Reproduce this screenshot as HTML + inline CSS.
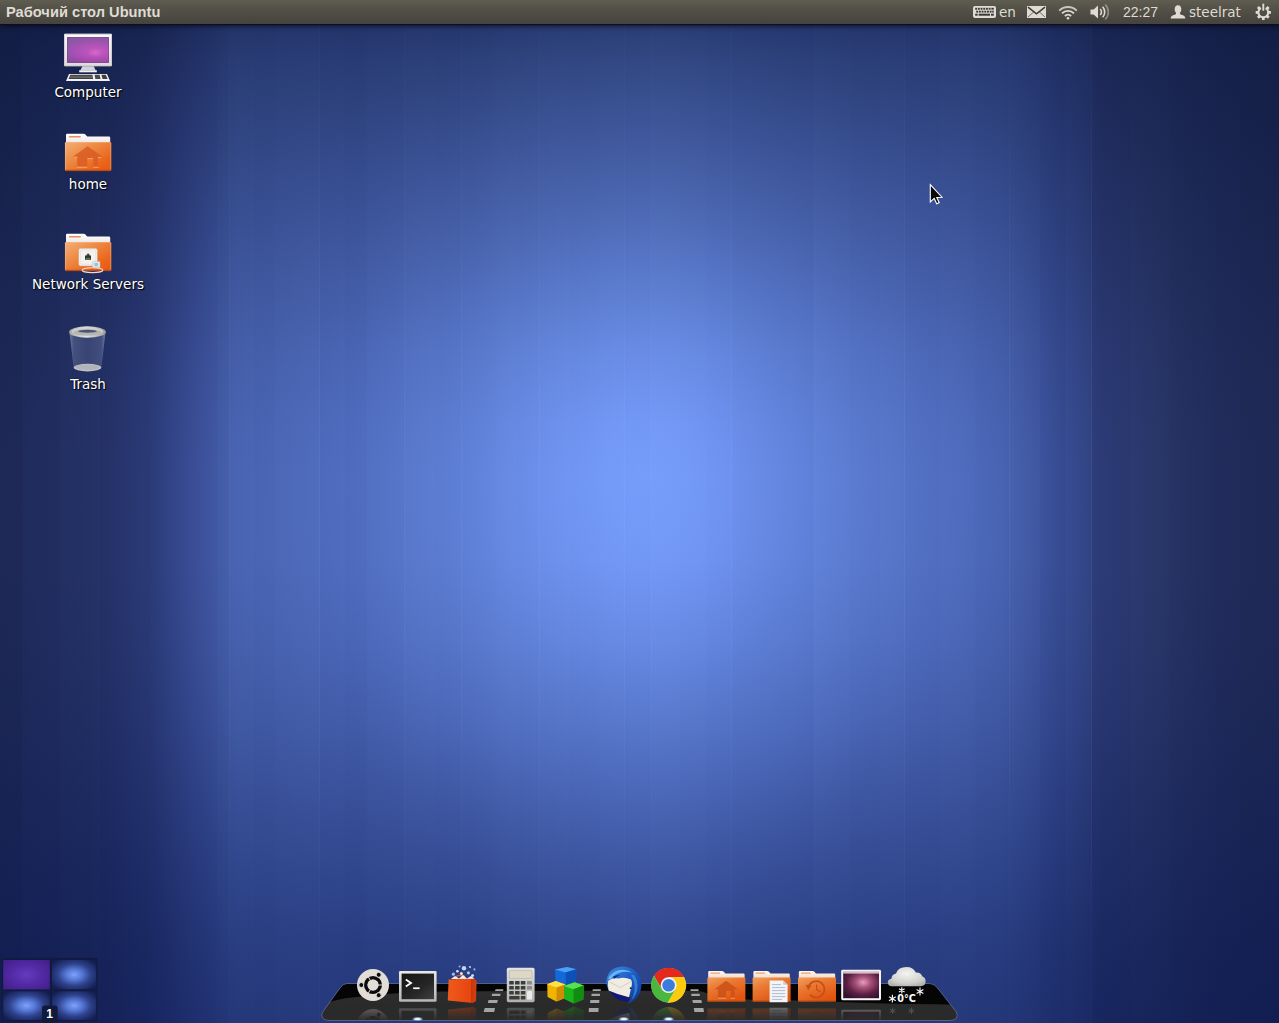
<!DOCTYPE html>
<html lang="ru">
<head>
<meta charset="utf-8">
<title>Рабочий стол Ubuntu</title>
<style>
html,body{margin:0;padding:0;}
body{width:1279px;height:1023px;overflow:hidden;position:relative;background:#1a2450;font-family:"DejaVu Sans","Liberation Sans",sans-serif;}
#wall{position:absolute;left:0;top:0;width:1279px;height:1023px;
background:linear-gradient(180deg,rgba(11,22,58,0.62) 24px,rgba(11,22,58,0.52) 60px,rgba(11,22,58,0.45) 100px,rgba(11,22,58,0.33) 174px,rgba(11,22,58,0.18) 274px,rgba(11,22,58,0.08) 350px,rgba(11,22,58,0.02) 424px,rgba(11,22,58,0) 480px,rgba(9,22,78,0.0) 560px,rgba(9,22,78,0.05) 640px,rgba(9,22,78,0.15) 724px,rgba(9,22,78,0.27) 800px,rgba(9,22,78,0.39) 874px,rgba(9,22,78,0.5) 950px,rgba(9,22,78,0.57) 1023px),
linear-gradient(90deg,rgba(255,255,255,0) 229px,rgba(255,255,255,.045) 229px,rgba(255,255,255,.045) 230px,rgba(255,255,255,0) 230px,rgba(255,255,255,0) 319px,rgba(255,255,255,.045) 319px,rgba(255,255,255,.045) 320px,rgba(255,255,255,0) 320px,rgba(255,255,255,0) 404px,rgba(255,255,255,.045) 404px,rgba(255,255,255,.045) 405px,rgba(255,255,255,0) 405px,rgba(255,255,255,0) 461px,rgba(255,255,255,.045) 461px,rgba(255,255,255,.045) 462px,rgba(255,255,255,0) 462px,rgba(255,255,255,0) 539px,rgba(255,255,255,.045) 539px,rgba(255,255,255,.045) 540px,rgba(255,255,255,0) 540px,rgba(255,255,255,0) 624px,rgba(255,255,255,.045) 624px,rgba(255,255,255,.045) 625px,rgba(255,255,255,0) 625px,rgba(255,255,255,0) 651px,rgba(255,255,255,.045) 651px,rgba(255,255,255,.045) 652px,rgba(255,255,255,0) 652px,rgba(255,255,255,0) 731px,rgba(255,255,255,.045) 731px,rgba(255,255,255,.045) 732px,rgba(255,255,255,0) 732px,rgba(255,255,255,0) 814px,rgba(255,255,255,.045) 814px,rgba(255,255,255,.045) 815px,rgba(255,255,255,0) 815px,rgba(255,255,255,0) 904px,rgba(255,255,255,.045) 904px,rgba(255,255,255,.045) 905px,rgba(255,255,255,0) 905px,rgba(255,255,255,0) 1009px,rgba(255,255,255,.045) 1009px,rgba(255,255,255,.045) 1010px,rgba(255,255,255,0) 1010px,rgba(255,255,255,0) 1091px,rgba(255,255,255,.045) 1091px,rgba(255,255,255,.045) 1092px,rgba(255,255,255,0) 1092px),
linear-gradient(90deg,rgba(0,0,10,0.06) 0px,rgba(0,0,10,0.06) 22px,rgba(150,185,255,0.000) 22px,rgba(150,185,255,0.000) 60px,rgba(150,185,255,0.016) 60px,rgba(150,185,255,0.016) 100px,rgba(0,0,10,0.01) 100px,rgba(0,0,10,0.01) 150px,rgba(150,185,255,0.000) 150px,rgba(150,185,255,0.000) 217px,rgba(150,185,255,0.026) 217px,rgba(150,185,255,0.026) 230px,rgba(150,185,255,0.046) 230px,rgba(150,185,255,0.046) 254px,rgba(150,185,255,0.026) 254px,rgba(150,185,255,0.026) 275px,rgba(150,185,255,0.046) 275px,rgba(150,185,255,0.046) 320px,rgba(150,185,255,0.013) 320px,rgba(150,185,255,0.013) 345px,rgba(0,0,10,0.01) 345px,rgba(0,0,10,0.01) 367px,rgba(150,185,255,0.019) 367px,rgba(150,185,255,0.019) 405px,rgba(150,185,255,0.046) 405px,rgba(150,185,255,0.046) 435px,rgba(150,185,255,0.026) 435px,rgba(150,185,255,0.026) 462px,rgba(150,185,255,0.039) 462px,rgba(150,185,255,0.039) 495px,rgba(150,185,255,0.058) 495px,rgba(150,185,255,0.058) 517px,rgba(150,185,255,0.039) 517px,rgba(150,185,255,0.039) 540px,rgba(150,185,255,0.052) 540px,rgba(150,185,255,0.052) 570px,rgba(150,185,255,0.026) 570px,rgba(150,185,255,0.026) 600px,rgba(150,185,255,0.046) 600px,rgba(150,185,255,0.046) 625px,rgba(150,185,255,0.026) 625px,rgba(150,185,255,0.026) 652px,rgba(150,185,255,0.058) 652px,rgba(150,185,255,0.058) 680px,rgba(150,185,255,0.039) 680px,rgba(150,185,255,0.039) 707px,rgba(150,185,255,0.000) 707px,rgba(150,185,255,0.000) 732px,rgba(0,0,10,0.012) 732px,rgba(0,0,10,0.012) 787px,rgba(0,0,10,0.008) 787px,rgba(0,0,10,0.008) 815px,rgba(150,185,255,0.039) 815px,rgba(150,185,255,0.039) 850px,rgba(150,185,255,0.019) 850px,rgba(150,185,255,0.019) 880px,rgba(150,185,255,0.039) 880px,rgba(150,185,255,0.039) 905px,rgba(150,185,255,0.013) 905px,rgba(150,185,255,0.013) 940px,rgba(150,185,255,0.033) 940px,rgba(150,185,255,0.033) 975px,rgba(150,185,255,0.007) 975px,rgba(150,185,255,0.007) 1010px,rgba(150,185,255,0.026) 1010px,rgba(150,185,255,0.026) 1040px,rgba(150,185,255,0.000) 1040px,rgba(150,185,255,0.000) 1065px,rgba(150,185,255,0.026) 1065px,rgba(150,185,255,0.026) 1092px,rgba(0,0,10,0.03) 1092px,rgba(0,0,10,0.03) 1130px,rgba(150,185,255,0.000) 1130px,rgba(150,185,255,0.000) 1170px,rgba(0,0,10,0.02) 1170px,rgba(0,0,10,0.02) 1200px,rgba(150,185,255,0.000) 1200px,rgba(150,185,255,0.000) 1240px,rgba(0,0,10,0.03) 1240px,rgba(0,0,10,0.03) 1279px),
radial-gradient(ellipse 420px 660px at 645px 468px,rgba(117,156,252,1) 0%,rgba(117,156,252,0.93) 10%,rgba(117,156,252,0.8) 20%,rgba(117,156,252,0.65) 30%,rgba(117,156,252,0.5) 40%,rgba(117,156,252,0.38) 50%,rgba(117,156,252,0.27) 60%,rgba(117,156,252,0.16) 70%,rgba(117,156,252,0.08) 80%,rgba(117,156,252,0.03) 90%,rgba(117,156,252,0) 100%),
linear-gradient(90deg,rgba(117,156,252,0) 470px,rgba(117,156,252,.1) 540px,rgba(117,156,252,.2) 645px,rgba(117,156,252,.1) 760px,rgba(117,156,252,0) 840px),
linear-gradient(90deg,#1f2a5a 0px,#222f63 90px,#2b3b78 150px,#3a4d95 192px,#4560ae 235px,#4863b3 320px,#4a66b8 640px,#4863b3 960px,#4560ae 1000px,#3c529c 1040px,#33468a 1075px,#2d3d7a 1100px,#283668 1160px,#212c5c 1220px,#1f2a58 1279px);}
#panel{position:absolute;left:0;top:0;width:1279px;height:24px;background:linear-gradient(#5f5d50 0%,#504e45 50%,#45433d 100%);box-shadow:0 1px 0 rgba(12,14,32,.9),0 2px 5px rgba(0,0,16,.7);}
#panel .title{position:absolute;left:6px;top:1px;line-height:23px;font-family:"Liberation Sans","DejaVu Sans",sans-serif;font-weight:bold;font-size:14.67px;color:#dfdbd2;white-space:nowrap;}
.ind{position:absolute;top:1px;line-height:23px;font-size:13.5px;color:#dfdbd2;white-space:nowrap;}
.ind.clock{font-family:"Liberation Sans","DejaVu Sans",sans-serif;font-size:14px;}
.pi{position:absolute;}
.dicon{position:absolute;left:-12px;margin-top:1px;width:200px;text-align:center;color:#fff;font-size:13.5px;line-height:18px;white-space:nowrap;text-shadow:1px 1px 1px rgba(0,0,0,.95),0 0 2px rgba(0,0,0,.5);}
</style>
</head>
<body>
<div id="wall"></div>
<div id="panel">
 <div class="title">Рабочий стол Ubuntu</div>
 <svg class="pi" style="left:973px;top:6px" width="23" height="12" viewBox="0 0 23 12">
  <rect x="0" y="0" width="23" height="12" rx="2" fill="#dfdbd2"/>
  <g fill="#3a3935">
   <rect x="2.2" y="1.8" width="1.9" height="1.9"/><rect x="4.9" y="1.8" width="1.9" height="1.9"/><rect x="7.6" y="1.8" width="1.9" height="1.9"/><rect x="10.3" y="1.8" width="1.9" height="1.9"/><rect x="13" y="1.8" width="1.9" height="1.9"/><rect x="15.7" y="1.8" width="1.9" height="1.9"/><rect x="18.4" y="1.8" width="2.4" height="1.9"/>
   <rect x="3.2" y="4.7" width="1.9" height="1.9"/><rect x="5.9" y="4.7" width="1.9" height="1.9"/><rect x="8.6" y="4.7" width="1.9" height="1.9"/><rect x="11.3" y="4.7" width="1.9" height="1.9"/><rect x="14" y="4.7" width="1.9" height="1.9"/><rect x="16.7" y="4.7" width="1.9" height="1.9"/><rect x="19.2" y="4.7" width="1.6" height="1.9"/>
   <rect x="2.2" y="7.7" width="2.4" height="2"/><rect x="5.6" y="7.7" width="11.4" height="2"/><rect x="18" y="7.7" width="2.8" height="2"/>
  </g>
 </svg>
 <div class="ind" style="left:999px">en</div>
 <svg class="pi" style="left:1027px;top:6px" width="19" height="12" viewBox="0 0 19 12">
  <rect x="0" y="0" width="19" height="12" fill="#dfdbd2"/>
  <path d="M1 1.2 L9.5 7.8 L18 1.2" fill="none" stroke="#3a3935" stroke-width="1.5"/>
  <path d="M1 11 L6.8 5.8 M18 11 L12.2 5.8" fill="none" stroke="#45433e" stroke-width=".9" opacity=".8"/>
 </svg>
 <svg class="pi" style="left:1056px;top:4px" width="24" height="16" viewBox="0 0 24 16">
  <g fill="none" stroke="#dfdbd2" stroke-linecap="butt">
   <path d="M3.2 6.6 A12.5 12.5 0 0 1 20.8 6.6" stroke-width="1.8" opacity=".85"/>
   <path d="M6 9.4 A8.5 8.5 0 0 1 18 9.4" stroke-width="1.9"/>
   <path d="M8.9 12.1 A4.4 4.4 0 0 1 15.1 12.1" stroke-width="1.9"/>
  </g>
  <circle cx="12" cy="14.2" r="1.3" fill="#dfdbd2"/>
 </svg>
 <svg class="pi" style="left:1089px;top:3px" width="23" height="18" viewBox="0 0 23 18">
  <path d="M1.5 6.6 H4.6 L9 2.6 V15.4 L4.6 11.4 H1.5 Z" fill="#dfdbd2"/>
  <g fill="none" stroke="#dfdbd2" stroke-width="1.6">
   <path d="M11.2 6 A4.2 4.2 0 0 1 11.2 12"/>
   <path d="M13.6 3.8 A7.4 7.4 0 0 1 13.6 14.2"/>
   <path d="M16.3 1.6 A10.6 10.6 0 0 1 16.3 16.4" opacity=".45"/>
  </g>
 </svg>
 <div class="ind clock" style="left:1123px">22:27</div>
 <svg class="pi" style="left:1170px;top:5px" width="16" height="14" viewBox="0 0 16 14">
  <path d="M8 0.3 C10.4 0.3 11.3 2.2 11.3 4.2 C11.3 6 10.6 7 9.9 7.7 C9.9 8.9 10.4 9.4 12.2 10.1 C14.2 10.9 15.2 11.6 15.4 13.6 H0.6 C0.8 11.6 1.8 10.9 3.8 10.1 C5.6 9.4 6.1 8.9 6.1 7.7 C5.4 7 4.7 6 4.7 4.2 C4.7 2.2 5.6 0.3 8 0.3 Z" fill="#dfdbd2"/>
 </svg>
 <div class="ind" style="left:1189px">steelrat</div>
 <svg class="pi" style="left:1254px;top:3px" width="19" height="18" viewBox="0 0 19 18">
  <g transform="translate(9.3 9.4) scale(.93)">
   <g fill="#dfdbd2">
    <rect x="-1.5" y="-8.2" width="3" height="3.4" transform="rotate(45)"/>
    <rect x="-1.5" y="-8.2" width="3" height="3.4" transform="rotate(90)"/>
    <rect x="-1.5" y="-8.2" width="3" height="3.4" transform="rotate(135)"/>
    <rect x="-1.5" y="-8.2" width="3" height="3.4" transform="rotate(180)"/>
    <rect x="-1.5" y="-8.2" width="3" height="3.4" transform="rotate(225)"/>
    <rect x="-1.5" y="-8.2" width="3" height="3.4" transform="rotate(270)"/>
    <rect x="-1.5" y="-8.2" width="3" height="3.4" transform="rotate(315)"/>
   </g>
   <path d="M-2.6 -4.6 A5.3 5.3 0 1 0 2.6 -4.6" fill="none" stroke="#dfdbd2" stroke-width="2.2"/>
   <rect x="-1" y="-9.4" width="2" height="7.6" fill="#dfdbd2"/>
  </g>
 </svg>
</div>
<svg style="position:absolute;left:56px;top:28px" width="64" height="56" viewBox="56 28 64 56">
 <defs>
  <linearGradient id="mfr" x1="0" y1="0" x2="0" y2="1"><stop offset="0" stop-color="#fbfbfb"/><stop offset="1" stop-color="#dcdadc"/></linearGradient>
  <radialGradient id="mscr" cx="0.68" cy="0.62" r="0.75"><stop offset="0" stop-color="#dc6cc8"/><stop offset="0.25" stop-color="#c054c0"/><stop offset="0.7" stop-color="#a850b4"/><stop offset="1" stop-color="#8a5aa8"/></radialGradient>
  <linearGradient id="mscr2" x1="0" y1="0" x2="0" y2="1"><stop offset="0" stop-color="#7a5a98" stop-opacity=".55"/><stop offset=".5" stop-color="#9a58b0" stop-opacity="0"/><stop offset="1" stop-color="#7a2a80" stop-opacity=".35"/></linearGradient>
 </defs>
 <rect x="64" y="33.8" width="48" height="32.4" rx="1" fill="url(#mfr)"/>
 <rect x="64.5" y="34.3" width="47" height="31.4" rx="1" fill="none" stroke="#c9c6cc" stroke-width=".8"/>
 <rect x="67.2" y="37.3" width="41.6" height="25.4" fill="url(#mscr)"/>
 <rect x="67.2" y="37.3" width="41.6" height="25.4" fill="url(#mscr2)"/>
 <rect x="67.5" y="37.6" width="41" height="24.8" fill="none" stroke="#6a2a70" stroke-width=".7" opacity=".7"/>
 <path d="M82.4 66.2 H93.8 L95.6 70.2 H80.4 Z" fill="#d4d4d8"/>
 <path d="M79.2 70.2 H96.8 V72.3 H79.2 Z" fill="#f0f0f2"/>
 <path d="M69 73.9 H107 L110 81 H66 Z" fill="#f2f2f4"/>
 <path d="M70.2 74.8 H92.4 L93.2 79 H68.6 Z" fill="#3a3a3c"/>
 <path d="M94.6 74.8 H99.6 L100.6 79 H95.4 Z" fill="#4a4a4c"/>
 <path d="M101.4 74.8 H105.8 L107.6 79 H102.6 Z" fill="#3e3e40"/>
 <path d="M70 76.2 H92.8 M69.4 77.6 H93" stroke="#9a9a9c" stroke-width=".5"/>
</svg>
<div class="dicon" style="top:82px">Computer</div>

<svg style="position:absolute;left:60px;top:128px" width="56" height="48" viewBox="60 128 56 48">
 <defs>
  <linearGradient id="fold" x1="0" y1="0" x2="1" y2="1"><stop offset="0" stop-color="#f4b07a"/><stop offset=".35" stop-color="#ee8e48"/><stop offset=".75" stop-color="#ea661c"/><stop offset="1" stop-color="#e8560e"/></linearGradient>
  <linearGradient id="foldb" x1="0" y1="0" x2="0" y2="1"><stop offset="0" stop-color="#ffffff"/><stop offset="1" stop-color="#e8e4e4"/></linearGradient>
 </defs>
 <g id="folder">
  <path d="M66 135 Q66 133.8 67.2 133.8 H83.6 Q84.6 133.8 85.4 134.6 L87.2 136.6 H109 Q110.2 136.6 110.2 137.8 V145 H66 Z" fill="url(#foldb)"/>
  <rect x="69" y="136" width="11.8" height="1.5" rx=".5" fill="#f08a58"/>
  <rect x="65" y="142" width="46.2" height="29" rx="1.2" fill="url(#fold)"/>
  <rect x="65.4" y="142.4" width="45.4" height="28.2" rx="1" fill="none" stroke="#f8c8a0" stroke-width=".7" opacity=".6"/>
  <path d="M65 169.8 H111.2 V170 Q111.2 171 110 171 H66.2 Q65 171 65 170 Z" fill="#c8480c"/>
 </g>
 <path d="M87.6 146.2 L102.4 156.6 H98 V166.6 H93.2 V158.4 H87.2 V166.6 H77.2 V156.6 H73.2 Z" fill="#d95e26" opacity=".9"/>
 <path d="M74.6 157.6 H77.2 M87.4 158.6 H93 M98 157.6 H101 M76.8 167.3 H87.2 M93.2 167.3 H98.6" stroke="#f6a878" stroke-width=".9"/>
</svg>
<div class="dicon" style="top:174px">home</div>

<svg style="position:absolute;left:60px;top:228px" width="56" height="48" viewBox="60 128 56 48">
 <use href="#folder"/>
 <rect x="78.6" y="148.2" width="18.8" height="17.8" rx="2" fill="#f4f2ee" stroke="#d8a078" stroke-width=".6"/>
 <rect x="80.4" y="150" width="15.2" height="14.2" rx="1" fill="none" stroke="#e0dcd6" stroke-width=".6"/>
 <path d="M85 155.6 H86.6 V154.4 H87.4 V153.6 H88.8 V154.4 H89.6 V155.6 H91 V159.8 H85 Z" fill="#2e3a2c"/>
 <rect x="86" y="158" width="4" height="1" fill="#6a7a4a"/>
 <ellipse cx="92.5" cy="170.2" rx="10.4" ry="2.4" fill="none" stroke="#f4d8d4" stroke-width="1.1"/>
 <rect x="92.6" y="161.4" width="7.4" height="6.4" rx="1" fill="#dfe9ee" stroke="#b8c4c8" stroke-width=".5"/>
 <rect x="94.4" y="163" width="3.6" height="3.2" fill="#9cc4d0"/>
</svg>
<div class="dicon" style="top:274px">Network Servers</div>

<svg style="position:absolute;left:60px;top:320px" width="56" height="56" viewBox="60 320 56 56">
 <defs>
  <linearGradient id="trb" x1="0" y1="0" x2="1" y2="0"><stop offset="0" stop-color="#8a94b4" stop-opacity=".75"/><stop offset=".12" stop-color="#5a6690" stop-opacity=".6"/><stop offset=".5" stop-color="#4a5684" stop-opacity=".55"/><stop offset=".88" stop-color="#56628e" stop-opacity=".6"/><stop offset="1" stop-color="#8a94b4" stop-opacity=".75"/></linearGradient>
  <linearGradient id="trr" x1="0" y1="0" x2="1" y2="0"><stop offset="0" stop-color="#a8aaa8"/><stop offset=".45" stop-color="#e4e4e0"/><stop offset="1" stop-color="#9c9e9c"/></linearGradient>
 </defs>
 <path d="M69.6 333 L73.6 367.4 Q87.5 372.5 101.4 367.4 L105.4 333 Z" fill="url(#trb)"/>
 <ellipse cx="87.5" cy="367.6" rx="13.8" ry="3.8" fill="#c0c4c4"/>
 <ellipse cx="87.5" cy="367.3" rx="12.2" ry="2.8" fill="#b0b4b8"/>
 <ellipse cx="87.5" cy="332" rx="18.4" ry="5.8" fill="url(#trr)"/>
 <ellipse cx="87.5" cy="331.7" rx="15.6" ry="4.2" fill="#d2d2ca"/>
 <ellipse cx="87.5" cy="332.4" rx="14.4" ry="3.2" fill="#b4b6b4"/>
 <ellipse cx="87.5" cy="331.2" rx="9.4" ry="1.5" fill="#4c5478"/>
</svg>
<div class="dicon" style="top:374px">Trash</div>
<svg id="dock" style="position:absolute;left:300px;top:950px" width="680" height="73" viewBox="300 950 680 73">
 <defs>
  <clipPath id="dockclip"><path id="dockshape" d="M347 983.5 H929.5 Q934 983.5 937.5 988 L956 1011.5 Q958.5 1015 956.5 1018 Q954.5 1020.5 950 1020.5 H329 Q324.5 1020.5 322.5 1018 Q320.5 1015 323 1011.5 L340 988 Q343 983.5 347 983.5 Z"/></clipPath>
  <linearGradient id="reffade" x1="0" y1="1006" x2="0" y2="1022" gradientUnits="userSpaceOnUse"><stop offset="0" stop-color="#fff" stop-opacity=".34"/><stop offset=".55" stop-color="#fff" stop-opacity=".13"/><stop offset="1" stop-color="#fff" stop-opacity="0"/></linearGradient>
  <mask id="refmask" maskUnits="userSpaceOnUse" x="300" y="1000" width="680" height="23"><rect x="300" y="1005.5" width="680" height="18" fill="url(#reffade)"/></mask>
  <linearGradient id="gloss" x1="0" y1="988" x2="0" y2="1021" gradientUnits="userSpaceOnUse"><stop offset="0" stop-color="#2e2e2e"/><stop offset="1" stop-color="#262626"/></linearGradient>
  <linearGradient id="termb" x1="0" y1="0" x2="0" y2="1"><stop offset="0" stop-color="#e8e8e8"/><stop offset="1" stop-color="#b4b4b4"/></linearGradient>
  <linearGradient id="termi" x1="0" y1="0" x2="1" y2="1"><stop offset="0" stop-color="#141414"/><stop offset=".6" stop-color="#262626"/><stop offset="1" stop-color="#404040"/></linearGradient>
  <linearGradient id="bag" x1="0" y1="0" x2="1" y2="0"><stop offset="0" stop-color="#ee5a1c"/><stop offset=".8" stop-color="#e6460e"/><stop offset=".81" stop-color="#c4380c"/><stop offset="1" stop-color="#d64010"/></linearGradient>
  <linearGradient id="calc" x1="0" y1="0" x2="0" y2="1"><stop offset="0" stop-color="#e4e4e4"/><stop offset="1" stop-color="#b0b0b0"/></linearGradient>
  <linearGradient id="dfold" x1="0" y1="0" x2=".6" y2="1"><stop offset="0" stop-color="#f0a060"/><stop offset=".4" stop-color="#ea7a32"/><stop offset="1" stop-color="#e05410"/></linearGradient>
  <linearGradient id="dfoldb" x1="0" y1="0" x2="0" y2="1"><stop offset="0" stop-color="#fdf8f4"/><stop offset="1" stop-color="#f2d2bc"/></linearGradient>
  <radialGradient id="dsk" cx=".56" cy=".4" r=".7"><stop offset="0" stop-color="#e0a0bc"/><stop offset=".3" stop-color="#a85078"/><stop offset=".65" stop-color="#5c2044"/><stop offset="1" stop-color="#30102a"/></radialGradient>
  <radialGradient id="cloud" cx=".5" cy=".35" r=".7"><stop offset="0" stop-color="#f4f4f2"/><stop offset=".7" stop-color="#d0d0cc"/><stop offset="1" stop-color="#b0b0ac"/></radialGradient>
  <linearGradient id="tbg" x1="0" y1="0" x2="1" y2="1"><stop offset="0" stop-color="#3c8ce4"/><stop offset=".5" stop-color="#1c5cc4"/><stop offset="1" stop-color="#0c348c"/></linearGradient>
  <radialGradient id="dotg" cx=".5" cy=".5" r=".5"><stop offset="0" stop-color="#ffffff"/><stop offset=".45" stop-color="#cfe4ff"/><stop offset="1" stop-color="#6aa0ff" stop-opacity="0"/></radialGradient>
 </defs>
 <use href="#dockshape" fill="#050505"/>
 <g clip-path="url(#dockclip)">
  <path d="M315 1006 L322 1004.5 Q334 1000.5 344 998.6 Q380 993.6 430 991.8 Q480 990.8 560 990.8 H694 Q702 991 706 993 Q716 998.4 745 999.4 Q800 1000.6 840 1002 Q880 1003.6 935 1004.5 L970 1006 V1024 H315 Z" fill="url(#gloss)"/>
  <rect x="300" y="1004.5" width="680" height="20" fill="#2a2a2a"/>
 </g>
 <use href="#dockshape" fill="none" stroke="#7f93c8" stroke-opacity=".55" stroke-width="1"/>
 <g id="dicons">
  <!-- ubuntu -->
  <g id="i_ub">
   <circle cx="373" cy="985" r="16" fill="#e2ded6"/>
   <circle cx="373" cy="985" r="7.3" fill="none" stroke="#0c0c10" stroke-width="3.5"/>
   <g stroke="#e2ded6" stroke-width="1">
    <path d="M373 985 L383.5 985 M373 985 L367.75 975.9 M373 985 L367.75 994.1"/>
   </g>
   <circle cx="373" cy="985" r="5.4" fill="#e2ded6"/>
   <g fill="#0c0c10" stroke="#e2ded6" stroke-width="1">
    <circle cx="361.3" cy="985" r="2.5"/><circle cx="378.7" cy="974.8" r="2.5"/><circle cx="378.7" cy="995.2" r="2.5"/>
   </g>
  </g>
  <!-- terminal -->
  <g id="i_term">
   <rect x="399" y="971" width="37.6" height="30.8" rx="1.2" fill="url(#termb)"/>
   <rect x="401.6" y="973.6" width="32.4" height="25.6" fill="url(#termi)"/>
   <path d="M405.8 979.6 L411 983 L405.8 986.4" fill="none" stroke="#fff" stroke-width="1.8"/>
   <rect x="413.2" y="987.4" width="6.4" height="1.7" fill="#fff"/>
  </g>
  <!-- software center bag -->
  <g id="i_bag">
   <path d="M448.6 979.6 L473.4 978.6 L476.6 980.6 L476 1001 L473 1003 L447.8 1000.4 Z" fill="url(#bag)"/>
   <path d="M456.6 980.2 V977.2 Q456.6 975.6 458.2 975.6 H463 Q464.6 975.6 464.6 977.2 V980" fill="none" stroke="#e85a20" stroke-width="1.4"/>
   <g fill="#dfe8f8">
    <circle cx="453.4" cy="974.2" r="1.6" fill="#9fb8e8"/><circle cx="457.4" cy="971.2" r="1.3"/><circle cx="461.4" cy="973.6" r="1.5"/><circle cx="464" cy="968.2" r="2.2" fill="#c8d4ec"/><circle cx="468.4" cy="972.8" r="1.6" fill="#a8c4f0"/><circle cx="472.6" cy="975.6" r="1.4"/><circle cx="474.4" cy="969.4" r="1.1" fill="#8fb0f0"/><circle cx="459.6" cy="966.6" r="1" fill="#8fb0f0"/><circle cx="470" cy="967" r=".9"/>
    <path d="M451 979 L455 976 L459 978.6 L463 975 L467 978.4 L471 976 L474.6 978.8 Z" fill="#f4f0f0"/>
   </g>
  </g>
  <!-- calculator -->
  <g id="i_calc">
   <rect x="506.8" y="967.8" width="27.8" height="34.4" rx="1.6" fill="url(#calc)"/>
   <rect x="509.4" y="970.4" width="22.6" height="8" rx=".8" fill="#dcd8c4" stroke="#a8a8a0" stroke-width=".5"/>
   <g fill="#3c3e3a">
    <rect x="509.2" y="981" width="4.6" height="3.6" rx=".6"/><rect x="515" y="981" width="4.6" height="3.6" rx=".6"/><rect x="520.8" y="981" width="4.6" height="3.6" rx=".6"/>
    <rect x="509.2" y="986" width="4.6" height="3.6" rx=".6"/><rect x="515" y="986" width="4.6" height="3.6" rx=".6"/><rect x="520.8" y="986" width="4.6" height="3.6" rx=".6"/>
    <rect x="509.2" y="991" width="4.6" height="3.6" rx=".6"/><rect x="515" y="991" width="4.6" height="3.6" rx=".6"/><rect x="520.8" y="991" width="4.6" height="3.6" rx=".6"/>
    <rect x="509.2" y="996" width="10.4" height="3.6" rx=".6"/><rect x="520.8" y="996" width="4.6" height="3.6" rx=".6"/>
   </g>
   <g fill="#8a8c88"><rect x="527" y="981" width="5" height="3.6" rx=".6"/><rect x="527" y="986" width="5" height="3.6" rx=".6"/></g>
   <rect x="527" y="991" width="5" height="8.6" rx=".6" fill="#e8ece8"/>
  </g>
  <!-- cubes -->
  <g id="i_cubes">
   <path d="M555 969.6 L567 967 L576.4 969.2 L576 982.4 L566 985.8 L555.6 982.6 Z" fill="#1468d8"/>
   <path d="M555 969.6 L567 967 L576.4 969.2 L565.6 972.4 Z" fill="#4aa0f4"/>
   <path d="M565.6 972.4 L576.4 969.2 L576 982.4 L566 985.8 Z" fill="#0c50b8"/>
   <path d="M547.2 984.2 L555.6 981 L565.4 984.4 L565 998 L556.4 1001.6 L547.6 997 Z" fill="#f0b400"/>
   <path d="M547.2 984.2 L555.6 981 L565.4 984.4 L556.6 987.6 Z" fill="#fce048"/>
   <path d="M556.6 987.6 L565.4 984.4 L565 998 L556.4 1001.6 Z" fill="#d08c00"/>
   <path d="M564 986 L574.6 982.2 L583.8 985.4 L583.4 999.4 L573.6 1003.6 L564.2 999 Z" fill="#1cb41c"/>
   <path d="M564 986 L574.6 982.2 L583.8 985.4 L573.4 989.2 Z" fill="#58e050"/>
   <path d="M573.4 989.2 L583.8 985.4 L583.4 999.4 L573.6 1003.6 Z" fill="#108c10"/>
  </g>
  <!-- thunderbird -->
  <g id="i_tb">
   <path d="M606.4 980.6 Q607.2 973.6 612.4 969.6 Q618.4 965.6 626 966.8 Q636 968.6 640.2 977.4 Q643.6 986.4 638.6 995 Q634.8 1001.4 627.6 1003.8 Q631 999.6 630.4 996.4 L609 990.6 Q606 986 606.4 980.6 Z" fill="url(#tbg)"/>
   <path d="M609.4 990.4 L629 997.2 Q629.6 1000.6 627 1002 Q622 1001.6 616.6 998.4 Q611.6 995 609.4 990.4 Z" fill="#10187c"/>
   <path d="M608.2 980.8 Q613 977.6 618.4 978.6 Q624 976.6 631 979.4 Q632.4 981.6 631.8 985 L629 997.2 Q618 994.6 608.6 990.4 Q607.4 985.4 608.2 980.8 Z" fill="#f1ece2"/>
   <path d="M609.6 982 L620.4 987.6 L631 981.4" fill="none" stroke="#cdc6b8" stroke-width=".8"/>
   <path d="M608 978.4 Q611.6 972.6 617.6 970.6 Q625.6 968.4 632.4 972.8 Q625.4 970.6 618.8 973 Q613.2 975.4 610.6 979.8 Z" fill="#6cb4f4"/>
   <path d="M633.6 974.6 Q638.8 981 637.2 989.4 Q635.8 995.6 631.6 999.8 Q635 993 634.6 986.6 Q634.2 979.6 631 975.6 Z" fill="#3c8ce0" opacity=".8"/>
   <path d="M612.6 977 Q616 974.6 620 975.6 Q617 976 614.6 978.4 Z" fill="#0c2c80"/>
   <circle cx="630.6" cy="988.2" r=".9" fill="#1a1a1a"/>
  </g>
  <!-- chrome -->
  <g id="i_chr">
   <circle cx="668.6" cy="985.2" r="17.2" fill="#f4f4f4"/>
   <path d="M653.95 975.63 A17.5 17.5 0 0 1 684.22 977.30 L668.60 977.30 L661.76 989.15 Z" fill="#e4291c"/>
   <path d="M684.22 977.30 A17.5 17.5 0 0 1 667.63 1002.67 L675.44 989.15 L668.60 977.30 Z" fill="#fbcb10"/>
   <path d="M667.63 1002.67 A17.5 17.5 0 0 1 653.95 975.63 L661.76 989.15 L675.44 989.15 Z" fill="#4ab83e"/>
   <circle cx="668.6" cy="985.2" r="7.9" fill="#f4f4f4"/>
   <circle cx="668.6" cy="985.2" r="6.3" fill="#3c7cdc"/>
  </g>
  <!-- folders -->
  <g id="dfolder">
   <path d="M708.2 972.2 Q708.2 971 709.4 971 H722 Q723 971 723.8 971.8 L725.4 973.4 H743.4 Q744.6 973.4 744.6 974.6 V980 H708.2 Z" fill="url(#dfoldb)"/>
   <rect x="710.4" y="972.6" width="9.6" height="1.2" rx=".4" fill="#f0a070"/>
   <rect x="707.4" y="977.6" width="38" height="23.8" rx="1" fill="url(#dfold)"/>
   <rect x="707.4" y="1000.4" width="38" height="1" fill="#c04c10"/>
  </g>
  <path d="M726.2 980.8 L738 989.2 H734.6 V997.6 H730.8 V991 H726 V997.6 H718 V989.2 H714.6 Z" fill="#cc5218" opacity=".9"/>
  <path d="M718 998.3 H726 M730.8 998.3 H735" stroke="#f4a478" stroke-width=".8"/>
  <use href="#dfolder" x="45.2"/>
  <path d="M769.6 980.4 H783.2 L787.6 984.8 V1002.2 H769.6 Z" fill="#f4f4f6"/>
  <path d="M783.2 980.4 L787.6 984.8 H783.2 Z" fill="#c8ccd4"/>
  <path d="M772 984.6 H781 M772 987.6 H785.2 M772 990.6 H785.2 M772 993.6 H785.2 M772 996.6 H785.2 M772 999.4 H782" stroke="#a8bcd8" stroke-width="1"/>
  <use href="#dfolder" x="90.6"/>
  <g fill="none" stroke="#c85018" stroke-width="1.7">
   <path d="M808.6 986.4 A8.2 8.2 0 1 1 810 994.6"/>
   <path d="M816.6 984.4 V989.6 L820.4 991.6" stroke-width="1.2"/>
  </g>
  <path d="M805.6 984.8 L811.6 985.6 L808.2 990.4 Z" fill="#c85018"/>
  <!-- desktop -->
  <g id="i_dsk">
   <rect x="841.2" y="969.8" width="39.8" height="30.4" rx="1.4" fill="#f6f4f6"/>
   <rect x="843.2" y="971.8" width="35.8" height="26.4" fill="url(#dsk)"/>
   <rect x="843.2" y="971.8" width="35.8" height="1.8" fill="#e8d8e0" opacity=".85"/>
  </g>
 </g>
  <!-- weather -->
  <g id="i_wth">
   <path d="M892 986.2 Q887.8 986.2 887.8 982.6 Q887.8 979.4 891.4 978.8 Q891.6 974.4 896 973.4 Q898.4 967 906.4 967 Q913.6 967 915.8 972.6 Q920.6 972 922.4 976.4 Q925.8 977.4 925.6 981.6 Q925.4 986.2 920.6 986.2 Z" fill="url(#cloud)"/>
   <g stroke="#f4f4f4" stroke-width="1.15" fill="none">
    <path d="M892.4 994.8 V1002.6 M889 996.7 L895.8 1000.7 M889 1000.7 L895.8 996.7"/>
    <path d="M901.8 987.2 V993.6 M899 988.8 L904.6 992 M899 992 L904.6 988.8"/>
    <path d="M920 987.6 V995.6 M916.6 989.6 L923.4 993.6 M916.6 993.6 L923.4 989.6"/>
   </g>
   <text x="897.2" y="1002.2" font-family="'DejaVu Sans','Liberation Sans',sans-serif" font-weight="bold" font-size="10.6" fill="#fff" textLength="18.6" lengthAdjust="spacingAndGlyphs">0°C</text>
  </g>
 <!-- separators -->
 <g fill="#a4a4a4">
  <path d="M495.6 989.2 H503.4 L503 991 H495 Z"/><path d="M492.2 993.8 H500.6 L500.2 996 H491.6 Z"/><path d="M488.6 1000 H497.8 L497.2 1003 H487.8 Z"/><path d="M484.8 1008 H495 L494.2 1012 H483.6 Z"/>
  <path d="M592.8 989.2 H600.8 L600.7 991 H592.6 Z"/><path d="M591.6 993.8 H600 L599.9 996 H591.4 Z"/><path d="M590.4 1000 H599.4 L599.2 1003 H590 Z"/><path d="M589 1008 H598.6 L598.4 1012 H588.6 Z"/>
  <path d="M690.4 989.2 H698.4 L698.7 991 H690.6 Z"/><path d="M691.2 993.8 H699.6 L699.9 996 H691.4 Z"/><path d="M692.4 1000 H701.4 L701.8 1003 H692.8 Z"/><path d="M693.8 1008 H703.4 L704 1012 H694.4 Z"/>
 </g>
 <!-- reflections -->
 <g clip-path="url(#dockclip)">
  <g mask="url(#refmask)">
   <use href="#dicons" transform="translate(0 2010) scale(1 -1)"/>
  </g>
  <g stroke="#f4f4f4" stroke-width=".9" fill="none" opacity=".22">
   <path d="M892.6 1007.6 V1014 M889.8 1009.2 L895.4 1012.4 M889.8 1012.4 L895.4 1009.2"/>
   <path d="M911.4 1007.6 V1014 M908.6 1009.2 L914.2 1012.4 M908.6 1012.4 L914.2 1009.2"/>
  </g>
  <ellipse cx="417.6" cy="1019.2" rx="6" ry="2.6" fill="url(#dotg)"/>
  <ellipse cx="623.8" cy="1019.2" rx="6" ry="2.6" fill="url(#dotg)"/>
  <ellipse cx="668.6" cy="1019.2" rx="6" ry="2.6" fill="url(#dotg)"/>
 </g>
</svg>
<svg style="position:absolute;left:0;top:955px" width="100" height="68" viewBox="0 955 100 68">
 <defs>
  <radialGradient id="wsb" cx=".5" cy=".5" r=".62"><stop offset="0" stop-color="#80a2fc"/><stop offset=".28" stop-color="#587ad8"/><stop offset=".6" stop-color="#2e428c"/><stop offset="1" stop-color="#141e50"/></radialGradient>
  <radialGradient id="wsp" cx=".5" cy=".5" r=".7"><stop offset="0" stop-color="#643cbc"/><stop offset=".5" stop-color="#5229a4"/><stop offset="1" stop-color="#401e84"/></radialGradient>
 </defs>
 <rect x="1.5" y="958" width="96" height="63.5" fill="#111a42"/>
 <rect x="3.2" y="960" width="46.6" height="29.4" fill="url(#wsp)"/>
 <rect x="52" y="960" width="44.2" height="29.4" fill="url(#wsb)"/>
 <rect x="3.2" y="991.2" width="46.6" height="28.8" fill="url(#wsb)"/>
 <rect x="52" y="991.2" width="44.2" height="28.8" fill="url(#wsb)"/>
 <rect x="42" y="1005.6" width="15.6" height="18" rx="2.4" fill="#121a3c"/>
 <text x="49.6" y="1018.2" text-anchor="middle" font-family="'Liberation Sans','DejaVu Sans',sans-serif" font-weight="bold" font-size="12" fill="#fff">1</text>
</svg>
<svg style="position:absolute;left:926px;top:180px" width="22" height="28" viewBox="926 180 22 28">
 <path d="M930.3 184.6 V202 L934.2 198.4 L936.7 203.8 L939.2 202.7 L936.8 197.5 L942 197.2 Z" fill="#0a0a0a" stroke="#fff" stroke-width="1.1" stroke-linejoin="miter"/>
</svg>

</body>
</html>
